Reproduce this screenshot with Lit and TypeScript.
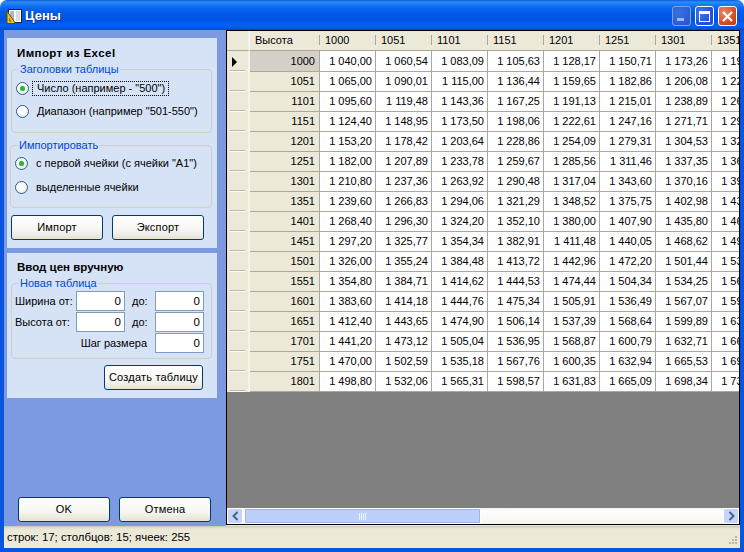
import { LitElement, html, css, svg } from "lit";
import { customElement } from "lit/decorators.js";

const COLS = ["1000","1051","1101","1151","1201","1251","1301","1351"];
const DATA: [string, number[]][] = [
  ["1000",[1040.00,1060.54,1083.09,1105.63,1128.17,1150.71,1173.26]],
  ["1051",[1065.00,1090.01,1115.00,1136.44,1159.65,1182.86,1206.08]],
  ["1101",[1095.60,1119.48,1143.36,1167.25,1191.13,1215.01,1238.89]],
  ["1151",[1124.40,1148.95,1173.50,1198.06,1222.61,1247.16,1271.71]],
  ["1201",[1153.20,1178.42,1203.64,1228.86,1254.09,1279.31,1304.53]],
  ["1251",[1182.00,1207.89,1233.78,1259.67,1285.56,1311.46,1337.35]],
  ["1301",[1210.80,1237.36,1263.92,1290.48,1317.04,1343.60,1370.16]],
  ["1351",[1239.60,1266.83,1294.06,1321.29,1348.52,1375.75,1402.98]],
  ["1401",[1268.40,1296.30,1324.20,1352.10,1380.00,1407.90,1435.80]],
  ["1451",[1297.20,1325.77,1354.34,1382.91,1411.48,1440.05,1468.62]],
  ["1501",[1326.00,1355.24,1384.48,1413.72,1442.96,1472.20,1501.44]],
  ["1551",[1354.80,1384.71,1414.62,1444.53,1474.44,1504.34,1534.25]],
  ["1601",[1383.60,1414.18,1444.76,1475.34,1505.91,1536.49,1567.07]],
  ["1651",[1412.40,1443.65,1474.90,1506.14,1537.39,1568.64,1599.89]],
  ["1701",[1441.20,1473.12,1505.04,1536.95,1568.87,1600.79,1632.71]],
  ["1751",[1470.00,1502.59,1535.18,1567.76,1600.35,1632.94,1665.53]],
  ["1801",[1498.80,1532.06,1565.31,1598.57,1631.83,1665.09,1698.34]],
];

const fmt = (n: number) => {
  const [a, b] = n.toFixed(2).split(".");
  return `${a.slice(0, -3)} ${a.slice(-3)},${b}`;
};

@customElement("app-root")
export class AppRoot extends LitElement {
  static styles = css`
    :host {
      display: flex; flex-direction: column; width: 744px; height: 552px; overflow: hidden;
      font: 11px/13px "Liberation Sans", Arial, sans-serif; color: #000; background: #fff;
    }
    .titlebar {
      height: 30px; flex: none; box-sizing: border-box; display: flex; align-items: center; padding: 2px 7px 0 6px;
      border-radius: 7px 7px 0 0;
      background: linear-gradient(180deg,#0a5ad8 0,#2f8bf5 2px,#1f7ef8 4px,#0a66f0 8px,#0058e8 14px,#0054e3 20px,#0061f4 25px,#0058e2 28px,#0046c8 30px);
    }
    .title { margin-left: 2px; color: #fff; font: bold 13px/16px "Liberation Sans", Arial, sans-serif; text-shadow: 1px 1px 0 #0a2f90; flex: 1; }
    .wbtns { display: flex; gap: 4px; }
    .wbtn { width: 19px; height: 20px; box-sizing: border-box; border: 1px solid #fff; border-radius: 3px; display: flex; align-items: center; justify-content: center; background: radial-gradient(circle at 30% 30%,#3c7cf0,#1a4fd6 70%,#2458d8); }
    .wbtn.min { border-color: #7fa2ee; background: radial-gradient(circle at 30% 30%,#3a70e2,#2a58d2 80%); }
    .wbtn.close { background: radial-gradient(circle at 30% 30%,#e98a68,#d2451e 70%,#c23c18); }
    .frame { flex: 1; display: flex; flex-direction: column; min-height: 0; border: solid #0a55e0; border-width: 0 4px 4px 4px; background: #ece9d8; }
    .main { flex: 1; display: flex; min-height: 0; }
    .panel { width: 222px; flex: none; display: flex; flex-direction: column; box-sizing: border-box; padding: 8px 0 4px 3px; background: #7b9ae0; }
    .card { width: 210px; box-sizing: border-box; background: #d6e3f7; padding: 9px 0 0 4px; display: flex; flex-direction: column; }
    .card.one { height: 210px; margin-bottom: 5px; }
    .card.two { height: 145px; padding-top: 8px; }
    .head { font-weight: bold; font-size: 11.5px; padding-left: 6px; margin-bottom: 3px; }
    .head.wide { letter-spacing: .4px; }
    fieldset { margin: 0; padding: 0; box-sizing: border-box; border: 1px solid #cfd0c4; border-radius: 4px; min-width: 0; }
    legend { color: #0046d5; margin-left: 7px; padding: 0 1px; font-size: 11px; line-height: 13px; }
    .g1 { width: 201px; height: 70px; display: flex; flex-direction: column; gap: 3px; padding-top: 2px; }
    .g2 { width: 202px; height: 69px; margin: 6px 0 0 -1px; padding-top: 1px; display: flex; flex-direction: column; gap: 4px; }
    .radio-row { height: 20px; display: flex; align-items: center; padding-left: 4px; gap: 8px; }
    .radio { width: 13px; height: 13px; box-sizing: border-box; border: 1px solid #2f5f8c; border-radius: 50%; background: radial-gradient(circle at 40% 35%,#fff 40%,#dcd8cc 100%); display: flex; align-items: center; justify-content: center; flex: none; }
    .radio.on::after { content: ""; width: 5px; height: 5px; border-radius: 50%; background: #2fb52f; box-shadow: 0 0 1px #7fe07f; }
    .focus { outline: 1px dotted #000; outline-offset: -1px; padding: 0 4px 0 5px; line-height: 15px; margin-left: -5px; display: inline-block; }
    .btns { display: flex; gap: 9px; margin-top: 7px; }
    button { box-sizing: border-box; width: 92px; height: 25px; padding: 0; border: 1px solid #003c74; border-radius: 3px; font: 11px/13px "Liberation Sans", Arial, sans-serif; color: #000; background: linear-gradient(180deg,#fff 0,#f7f6f1 60%,#e6e3d4 100%); letter-spacing: .2px; }
    .new { width: 201px; height: 82px; display: block; padding: 0; }
    .fields { display: grid; grid-template-columns: 64px 49px 30px 49px; grid-auto-rows: 20px; row-gap: 1px; align-items: center; padding-top: 1px; }
    .fields .lbl { padding-left: 3px; white-space: nowrap; }
    .fields .to { padding-left: 7px; }
    .fields .step { grid-column: 1 / span 3; text-align: right; padding-right: 8px; }
    .fields input { box-sizing: border-box; width: 49px; height: 20px; border: 1px solid #7f9db9; background: #fff; margin: 0; padding: 0 3px 0 0; text-align: right; font: 11.5px "Liberation Sans", Arial, sans-serif; color: #000; outline: none; border-radius: 0; }
    .create { width: 99px; margin: 6px 0 0 93px; }
    .bottom { margin-top: auto; display: flex; gap: 9px; padding-left: 11px; }
    .gridbox { flex: 1; min-width: 0; display: flex; flex-direction: column; background: #808080; border: 1px solid #000; margin-bottom: 1px; }
    .table { display: grid; grid-template-columns: 23px 70px repeat(8, 56px); grid-template-rows: 20px 21px repeat(16, 20px); overflow: hidden; width: 512px; flex: none; }
    .c { box-sizing: border-box; white-space: nowrap; display: flex; align-items: center; overflow: hidden; font-size: 11px; }
    .ind { background: #ece9d8; border-right: 2px solid #f5f3ea; position: relative; }
    .ind.top { border-bottom: 1px solid #aca899; }
    .ind.row::after { content: ""; position: absolute; left: 3px; right: 3px; bottom: 0; height: 2px; background: linear-gradient(#b9b6a6 50%, #fff 50%); opacity: .9; }
    .arrow { width: 0; height: 0; border-left: 5px solid #000; border-top: 5px solid transparent; border-bottom: 5px solid transparent; margin-left: 5px; }
    .hd { background: #ece9d8; border-bottom: 1px solid #aca899; padding-left: 5px; position: relative; }
    .hd::after { content: ""; position: absolute; right: 0; top: 4px; bottom: 5px; width: 1px; background: #aca899; }
    .rh { background: #ece9d8; justify-content: flex-end; padding-right: 4px; border-right: 1px solid #aca899; border-bottom: 1px solid #aca899; }
    .rh.cur { background: #d4d0c8; }
    .v { background: #fff; justify-content: flex-end; padding-right: 3px; border-right: 1px solid #aca899; border-bottom: 1px solid #aca899; }
    .empty { flex: 1; }
    .sb { height: 16px; flex: none; display: flex; align-items: stretch; background: linear-gradient(180deg,#f4f2ea,#fefefe 20%,#f6f4ee); }
    .arr { width: 16px; flex: none; box-sizing: border-box; border: 1px solid #fff; border-radius: 2px; background: #c3d5fb; display: flex; align-items: center; justify-content: center; }
    .thumb { width: 237px; margin-left: 1px; box-sizing: border-box; border: 1px solid #fff; outline: 1px solid #9db4ea; outline-offset: -2px; border-radius: 2px; background: #bdd0fa; display: flex; align-items: center; justify-content: center; }
    .track { flex: 1; }
    .status { height: 22px; flex: none; display: flex; align-items: center; justify-content: space-between; padding: 1px 2px 0 3px; box-sizing: border-box; background: linear-gradient(180deg,#c9c6b6 0,#e4e1cf 2px,#ece9d8 4px); font-size: 11.4px; }
    .grip { align-self: flex-end; margin-bottom: 1px; }
  `;

  private appIcon() {
    return html`<svg width="17" height="17" viewBox="0 0 17 17">
      <rect x="2.5" y="1.5" width="13" height="13" fill="#fff" stroke="#222"/>
      <rect x="4" y="3" width="4" height="10" fill="#a8b8cc"/>
      <rect x="10" y="3" width="4" height="10" fill="#d8dce4"/>
      <path d="M1 3 L9.5 15.5 L1 15.5 Z" fill="#f5c51c" stroke="#5a4a00" stroke-width="1"/>
      <path d="M3 9.5 L5.5 13.5 L3 13.5 Z" fill="#7a6a10"/>
    </svg>`;
  }

  private radio(label: unknown, on = false) {
    return html`<div class="radio-row"><span class="radio ${on ? "on" : ""}"></span><span>${label}</span></div>`;
  }

  private table() {
    const cells = [
      html`<div class="c ind top"></div>`,
      html`<div class="c hd">Высота</div>`,
      ...COLS.map((c) => html`<div class="c hd">${c}</div>`),
    ];
    DATA.forEach(([h, vals], i) => {
      const extra = 2 * vals[6] - vals[5];
      cells.push(html`<div class="c ind row">${i === 0 ? html`<span class="arrow"></span>` : ""}</div>`);
      cells.push(html`<div class="c rh ${i === 0 ? "cur" : ""}">${h}</div>`);
      [...vals, extra].forEach((v) => cells.push(html`<div class="c v">${fmt(v)}</div>`));
    });
    return cells;
  }

  render() {
    return html`
      <div class="titlebar">
        ${this.appIcon()}
        <div class="title">Цены</div>
        <div class="wbtns">
          <div class="wbtn min"><svg width="11" height="11" viewBox="0 0 11 11"><rect x="1" y="7" width="7" height="3" fill="#9db8f0"/></svg></div>
          <div class="wbtn"><svg width="13" height="13" viewBox="0 0 13 13"><rect x="1.5" y="2" width="10" height="9.5" fill="none" stroke="#fff"/><rect x="1" y="1" width="11" height="3" fill="#fff"/></svg></div>
          <div class="wbtn close"><svg width="13" height="13" viewBox="0 0 13 13"><path d="M2 2 L11 11 M11 2 L2 11" stroke="#fff" stroke-width="2.2"/></svg></div>
        </div>
      </div>
      <div class="frame">
        <div class="main">
          <div class="panel">
            <div class="card one">
              <div class="head wide">Импорт из Excel</div>
              <fieldset class="g1">
                <legend>Заголовки таблицы</legend>
                ${this.radio(html`<span class="focus">Число (например - "500")</span>`, true)}
                ${this.radio('Диапазон (например "501-550")')}
              </fieldset>
              <fieldset class="g2">
                <legend>Импортировать</legend>
                ${this.radio('с первой ячейки (с ячейки "А1")', true)}
                ${this.radio("выделенные ячейки")}
              </fieldset>
              <div class="btns"><button>Импорт</button><button>Экспорт</button></div>
            </div>
            <div class="card two">
              <div class="head">Ввод цен вручную</div>
              <fieldset class="new">
                <legend>Новая таблица</legend>
                <div class="fields">
                  <span class="lbl">Ширина от:</span><input value="0" readonly /><span class="to">до:</span><input value="0" readonly />
                  <span class="lbl">Высота от:</span><input value="0" readonly /><span class="to">до:</span><input value="0" readonly />
                  <span class="step">Шаг размера</span><input value="0" readonly />
                </div>
              </fieldset>
              <button class="create">Создать таблицу</button>
            </div>
            <div class="bottom"><button>OK</button><button>Отмена</button></div>
          </div>
          <div class="gridbox">
            <div class="table">${this.table()}</div>
            <div class="empty"></div>
            <div class="sb">
              <div class="arr"><svg width="9" height="10" viewBox="0 0 9 10"><path d="M6.5 1 L2.5 5 L6.5 9" fill="none" stroke="#4d6185" stroke-width="2"/></svg></div>
              <div class="thumb"><svg width="8" height="7" viewBox="0 0 8 7"><path d="M.5 0v7M2.5 0v7M4.5 0v7M6.5 0v7" stroke="#eef3ff"/></svg></div>
              <div class="track"></div>
              <div class="arr"><svg width="9" height="10" viewBox="0 0 9 10"><path d="M2.5 1 L6.5 5 L2.5 9" fill="none" stroke="#4d6185" stroke-width="2"/></svg></div>
            </div>
          </div>
        </div>
        <div class="status">
          <span>строк: 17; столбцов: 15; ячеек: 255</span>
          <svg class="grip" width="12" height="12" viewBox="0 0 12 12" fill="#b8b5a2">${[[9,1],[6,4],[9,4],[3,7],[6,7],[9,7]].map(([x,y]) => svg`<rect x="${x}" y="${y}" width="2" height="2"/>`)}</svg>
        </div>
      </div>
    `;
  }
}
